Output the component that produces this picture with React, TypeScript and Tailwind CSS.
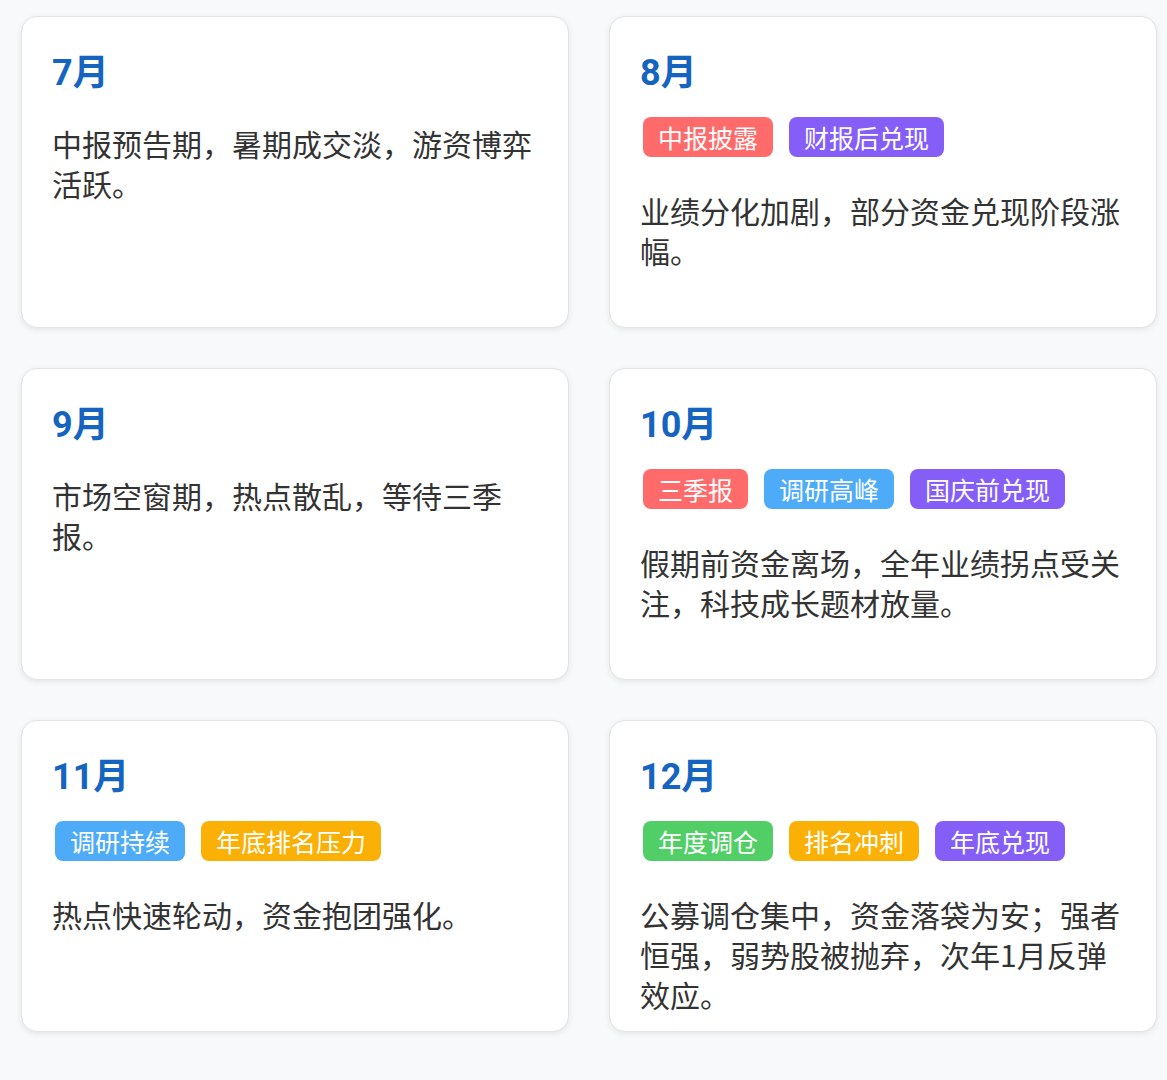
const cards = [
  { m: "7月", tags: [], t: "中报预告期，暑期成交淡，游资博弈活跃。" },
  { m: "8月", tags: [["中报披露", "bg-[#ff6b6b]"], ["财报后兑现", "bg-[#845ef7]"]], t: "业绩分化加剧，部分资金兑现阶段涨幅。" },
  { m: "9月", tags: [], t: "市场空窗期，热点散乱，等待三季报。" },
  { m: "10月", tags: [["三季报", "bg-[#ff6b6b]"], ["调研高峰", "bg-[#4dabf7]"], ["国庆前兑现", "bg-[#845ef7]"]], t: "假期前资金离场，全年业绩拐点受关注，科技成长题材放量。" },
  { m: "11月", tags: [["调研持续", "bg-[#4dabf7]"], ["年底排名压力", "bg-[#fab005]"]], t: "热点快速轮动，资金抱团强化。" },
  { m: "12月", tags: [["年度调仓", "bg-[#51cf66]"], ["排名冲刺", "bg-[#fab005]"], ["年底兑现", "bg-[#845ef7]"]], t: "公募调仓集中，资金落袋为安；强者恒强，弱势股被抛弃，次年1月反弹效应。" },
];

export default function App() {
  return (
    <div className="min-h-[1080px] bg-[#f8f9fa] pl-[21px] pr-[10px] pt-[16px]" style={{ fontFamily: '"Noto Sans CJK SC", "Noto Sans", sans-serif' }}>
      <div className="grid grid-cols-2 gap-x-[40px] gap-y-[40px]">
        {cards.map((c) => (
          <div key={c.m} className="h-[312px] rounded-[16px] border border-[#e3e3e3] bg-white px-[30px] pt-[30px] shadow-[0_2px_6px_rgba(0,0,0,0.08)]">
            <div className="text-[36px] font-bold leading-[52px] text-[#1565c0]" style={{ fontFamily: 'Roboto, "Noto Sans CJK SC", sans-serif' }}>{c.m}</div>
            {c.tags.length > 0 && (
              <div className="ml-[3px] mt-[18px] flex gap-[16px]">
                {c.tags.map(([n, bg]) => (
                  <span key={n} className={`${bg} rounded-[8px] px-[15px] text-[25px] leading-[40px] text-white`}>{n}</span>
                ))}
              </div>
            )}
            <p className={`${c.tags.length ? "mt-[33px]" : "mt-[24px]"} text-[30px] leading-[40px] text-[#333]`}>{c.t}</p>
          </div>
        ))}
      </div>
    </div>
  );
}
